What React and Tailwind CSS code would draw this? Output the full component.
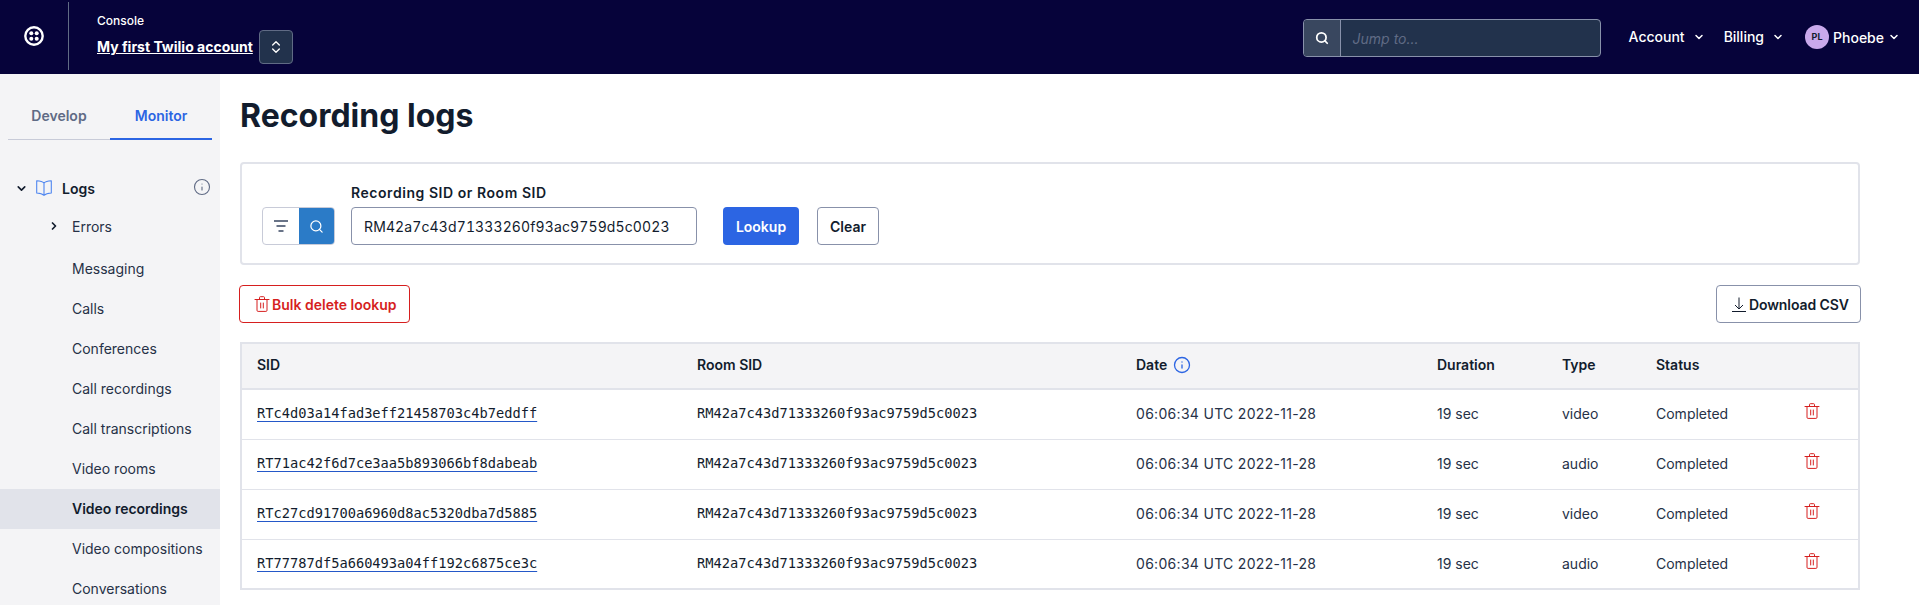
import { Search, ChevronDown, ChevronRight, ChevronsUpDown, Info } from 'lucide-react'

const NAV_ITEMS = ['Messaging', 'Calls', 'Conferences', 'Call recordings', 'Call transcriptions', 'Video rooms', 'Video recordings', 'Video compositions', 'Conversations']

const ROWS = [
  { sid: 'RTc4d03a14fad3eff21458703c4b7eddff', type: 'video' },
  { sid: 'RT71ac42f6d7ce3aa5b893066bf8dabeab', type: 'audio' },
  { sid: 'RTc27cd91700a6960d8ac5320dba7d5885', type: 'video' },
  { sid: 'RT77787df5a660493a04ff192c6875ce3c', type: 'audio' },
]

const ROOM_SID = 'RM42a7c43d71333260f93ac9759d5c0023'

function TwilioLogo() {
  return (
    <svg width="20" height="20" viewBox="0 0 20 20" fill="none">
      <circle cx="10" cy="10" r="8.7" stroke="white" strokeWidth="2.4" />
      <circle cx="7.3" cy="7.3" r="2" fill="white" />
      <circle cx="12.7" cy="7.3" r="2" fill="white" />
      <circle cx="7.3" cy="12.7" r="2" fill="white" />
      <circle cx="12.7" cy="12.7" r="2" fill="white" />
    </svg>
  )
}

function BookIcon() {
  return (
    <svg width="16" height="16" viewBox="0 0 16 16" fill="none" stroke="#4f86f0" strokeWidth="1.1" strokeLinejoin="round" className="shrink-0">
      <path d="M8 3 C6.5 1.6 3 1 .7 .8 V13 C3 13.2 6 13.6 8 15.4 C10 13.6 13 13.2 15.3 13 V.8 C13 1 9.5 1.6 8 3 Z M8 3 V15.4" />
    </svg>
  )
}

function FilterIcon() {
  return (
    <svg width="14" height="12" viewBox="0 0 14 12" fill="none" stroke="currentColor" strokeWidth="1.5" className="shrink-0">
      <path d="M0 1 H14 M2.5 6 H11.5 M4.5 11 H9.5" />
    </svg>
  )
}

function TrashIcon() {
  return (
    <svg width="16" height="16" viewBox="0 0 16 16" fill="none" stroke="currentColor" strokeWidth="1" strokeLinecap="round" className="shrink-0">
      <path d="M1 3.5 H15" />
      <path d="M5.5 3.5 V1.6 Q5.5 .7 6.4 .7 H9.6 Q10.5 .7 10.5 1.6 V3.5" />
      <path d="M3 3.5 V14.3 Q3 15.4 4.1 15.4 H11.9 Q13 15.4 13 14.3 V3.5" />
      <path d="M6.7 7 V12 M9.3 7 V12" />
    </svg>
  )
}

function DownloadIcon() {
  return (
    <svg width="14" height="15" viewBox="0 0 14 15" fill="none" stroke="currentColor" strokeWidth="1" className="shrink-0">
      <path d="M7 .5 V12 M3 8 L7 12 L11 8" />
      <path d="M0 14.5 H14" />
    </svg>
  )
}

function Header() {
  return (
    <header className="h-[74px] bg-[#06033a] flex items-center text-white">
      <div className="w-[69px] h-[68px] mb-[2px] border-r border-[#606b85] flex items-center justify-center shrink-0 pr-px">
        <TwilioLogo />
      </div>
      <div className="ml-[28px] mt-[3px]">
        <div className="text-[12px] leading-[16px] font-medium">Console</div>
        <div className="flex items-center mt-px">
          <span className="text-[14px] font-bold underline leading-[20px]">My first Twilio account</span>
          <button className="ml-[6px] w-[34px] h-[34px] rounded-[4px] bg-[#22324c] border border-[#606b85] flex items-center justify-center">
            <ChevronsUpDown size={16} strokeWidth={2} />
          </button>
        </div>
      </div>
      <div className="ml-auto flex items-center mr-[19px]">
        <div className="w-[298px] h-[38px] mt-[2px] flex rounded-[4px] border border-[#8891aa] bg-[#22324c] overflow-hidden">
          <div className="w-[37px] bg-[#39475f] border-r border-[#8891aa] flex items-center justify-center">
            <Search size={14} strokeWidth={3} />
          </div>
          <div className="flex-1 pl-[12px] flex items-center text-[14px] italic text-[#606b85]">Jump to...</div>
        </div>
        <div className="ml-[28px] -mt-[1px] flex items-center text-[14px] font-medium">
          Account <ChevronDown size={12} strokeWidth={3} className="ml-[8px]" />
        </div>
        <div className="ml-[19px] -mt-[1px] flex items-center text-[14px] font-medium">
          Billing <ChevronDown size={12} strokeWidth={3} className="ml-[8px]" />
        </div>
        <div className="ml-[21px] flex items-center text-[14px] font-medium">
          <span className="w-[24px] h-[24px] rounded-full bg-[#c9a9ec] text-[#121c2d] text-[9px] font-bold flex items-center justify-center mr-[4px]">PL</span>
          Phoebe <ChevronDown size={12} strokeWidth={3} className="ml-[4px]" />
        </div>
      </div>
    </header>
  )
}

function Sidebar() {
  return (
    <aside className="w-[220px] shrink-0 bg-[#f4f4f6] overflow-hidden">
      <div className="mx-[8px] mt-[20px] flex border-b border-[#c8cbd8] h-[46px] text-[14px] font-semibold">
        <div className="w-[102px] pt-[11px] text-center text-[#606b85]">Develop</div>
        <div className="w-[102px] pt-[11px] text-center text-[#2c65e3] border-b-2 border-[#2c65e3] h-[46px]">Monitor</div>
      </div>
      <div className="mt-[36px] flex items-center h-[24px] pl-[15px] pr-[9px]">
        <ChevronDown size={13} strokeWidth={3} className="text-[#121c2d]" />
        <span className="ml-[8px]"><BookIcon /></span>
        <span className="ml-[10px] text-[14px] font-semibold text-[#121c2d]">Logs</span>
        <Info size={18} strokeWidth={1.5} className="ml-auto text-[#606b85] -mt-[3px]" />
      </div>
      <div className="mt-[6px] h-[40px] flex items-center text-[14px] text-[#263147]">
        <ChevronRight size={12} strokeWidth={3.5} className="ml-[48px] text-[#121c2d]" />
        <span className="ml-[12px]">Errors</span>
      </div>
      <div className="mt-[3px]">
        {NAV_ITEMS.map(item => (
          <div
            key={item}
            className={`h-[40px] flex items-center pl-[72px] pb-px text-[14px] ${
              item === 'Video recordings' ? 'bg-[#e1e3ea] font-semibold text-[#121c2d]' : 'text-[#263147]'
            }`}
          >
            {item}
          </div>
        ))}
      </div>
    </aside>
  )
}

function LookupPanel() {
  return (
    <div className="h-[103px] border-2 border-[#e1e3ea] rounded-[4px] flex items-end pb-[18px] pl-[20px]">
      <div className="w-[73px] h-[38px] flex rounded-[4px] border border-[#c8cbd8] overflow-hidden">
        <div className="w-[36px] flex items-center justify-center text-[#394762]">
          <FilterIcon />
        </div>
        <div className="flex-1 bg-[#2b7bc7] flex items-center justify-center text-white">
          <Search size={15} strokeWidth={2} />
        </div>
      </div>
      <div className="ml-[16px]">
        <label className="block text-[14px] font-semibold text-[#121c2d] leading-[20px] mb-[4px] tracking-[0.55px]">Recording SID or Room SID</label>
        <div className="w-[346px] h-[38px] border border-[#8891aa] rounded-[4px] flex items-center pl-[12px] text-[14px] text-[#121c2d] tabular-nums tracking-[0.12px]">
          {ROOM_SID}
        </div>
      </div>
      <button className="ml-[26px] w-[76px] h-[38px] rounded-[4px] bg-[#2c65e3] text-white text-[14px] font-semibold">Lookup</button>
      <button className="ml-[18px] w-[62px] h-[38px] rounded-[4px] border border-[#8891aa] text-[#121c2d] text-[14px] font-semibold">Clear</button>
    </div>
  )
}

function RecordingsTable() {
  return (
    <table className="mt-[19px] w-full table-fixed border-collapse border-2 border-[#e1e3ea] text-[14px] text-[#121c2d]">
      <colgroup>
        <col className="w-[440px]" />
        <col className="w-[439px]" />
        <col className="w-[301px]" />
        <col className="w-[125px]" />
        <col className="w-[94px]" />
        <col className="w-[150px]" />
        <col />
      </colgroup>
      <thead>
        <tr className="h-[46px] bg-[#f4f4f6] border-b-2 border-[#e1e3ea] text-left">
          <th className="pl-[15px] pb-[3px] font-semibold">SID</th>
          <th className="pl-[16px] pb-[3px] font-semibold">Room SID</th>
          <th className="pl-[16px] pb-[3px] font-semibold">
            <span className="flex items-center">Date <Info size={18} strokeWidth={1.75} className="ml-[6px] text-[#2c65e3]" /></span>
          </th>
          <th className="pl-[16px] pb-[3px] font-semibold">Duration</th>
          <th className="pl-[16px] pb-[3px] font-semibold">Type</th>
          <th className="pl-[16px] pb-[3px] font-semibold">Status</th>
          <th />
        </tr>
      </thead>
      <tbody>
        {ROWS.map(row => (
          <tr key={row.sid} className="h-[50px] border-b border-[#e1e3ea]">
            <td className="pl-[15px] pb-[1px] font-['DejaVu_Sans_Mono',monospace] text-[13.7px]">
              <a href="#" className="underline decoration-1 decoration-[#2458c8] underline-offset-[3px]">{row.sid}</a>
            </td>
            <td className="pl-[16px] pb-[1px] font-['DejaVu_Sans_Mono',monospace] text-[13.7px]">{ROOM_SID}</td>
            <td className="pl-[16px] pb-[1px] text-[#263147] tracking-[0.3px]">06:06:34 UTC 2022-11-28</td>
            <td className="pl-[16px] pb-[1px] text-[#263147]">19 sec</td>
            <td className="pl-[16px] pb-[1px] text-[#263147]">{row.type}</td>
            <td className="pl-[16px] pb-[1px] text-[#263147]">Completed</td>
            <td className="pl-[14px] pb-[6px] text-[#d61f1f]"><TrashIcon /></td>
          </tr>
        ))}
      </tbody>
    </table>
  )
}

export default function App() {
  return (
    <div className="h-[605px] overflow-hidden flex flex-col bg-white font-['Inter',sans-serif]">
      <Header />
      <div className="flex flex-1 min-h-0">
        <Sidebar />
        <main className="flex-1 pl-[20px] pr-[59px] overflow-hidden">
          <h1 className="mt-[21px] text-[32px] leading-[42px] font-bold text-[#121c2d]">Recording logs</h1>
          <div className="mt-[25px]">
            <LookupPanel />
          </div>
          <div className="mt-[20px] flex justify-between">
            <button className="-ml-px w-[171px] h-[38px] pl-[14px] rounded-[4px] border border-[#d61f1f] text-[#d61f1f] text-[14px] font-semibold flex items-center gap-[2px]">
              <TrashIcon />
              Bulk delete lookup
            </button>
            <button className="-mr-px w-[145px] h-[38px] pl-[15px] rounded-[4px] border border-[#8891aa] text-[#121c2d] text-[14px] font-semibold tracking-[-0.1px] flex items-center gap-[3px]">
              <DownloadIcon />
              Download CSV
            </button>
          </div>
          <RecordingsTable />
        </main>
      </div>
    </div>
  )
}
